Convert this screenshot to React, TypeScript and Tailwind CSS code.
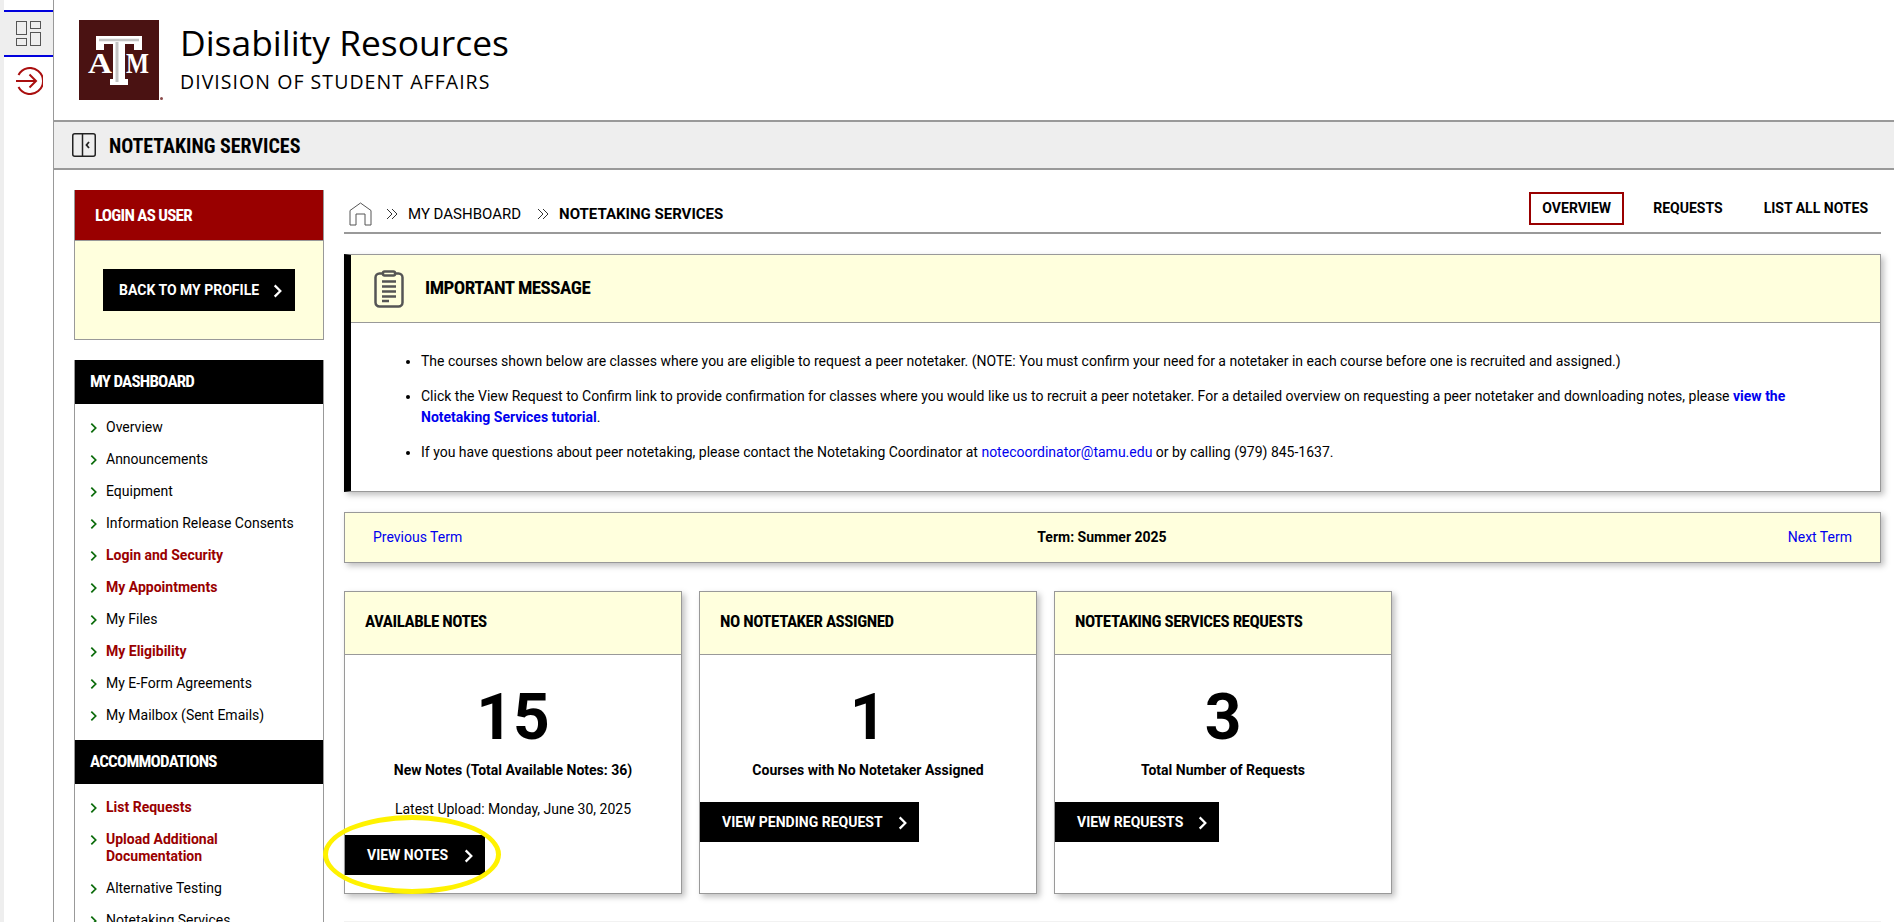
import React from 'react';

const roboto = 'font-["Roboto",sans-serif]';

const Chevron = ({ className }: { className: string }) => (
  <svg viewBox="0 0 8 12" className={className} fill="none" stroke="currentColor" strokeWidth="2">
    <path d="M1.5 1 L6.5 6 L1.5 11" />
  </svg>
);

const DoubleChevron = () => (
  <svg viewBox="0 0 12 12" className="w-[12px] h-[12px] text-[#333]" fill="none" stroke="currentColor" strokeWidth="1">
    <path d="M1 1 L6 6 L1 11 M6 1 L11 6 L6 11" />
  </svg>
);

const BlackButton = ({ label, className }: { label: string; className: string }) => (
  <a className={`flex items-center justify-between bg-black text-white font-bold text-[14px] uppercase ${className}`}>
    <span>{label}</span>
    <Chevron className="w-[9px] h-[14px] mt-[2px]" />
  </a>
);

const Logo = () => (
  <div className="relative w-[84px] h-[80px] shrink-0">
    <svg viewBox="0 0 80 80" className="w-[80px] h-[80px]">
      <rect width="80" height="80" fill="#4a1212" />
      <path d="M17 16 H63 V30 H55 V24 H46 V59 H49 V65 H31 V59 H34 V24 H25 V30 H17 Z" fill="#fff" />
      <path d="M20 20 H60" stroke="#c4c4c4" strokeWidth="2.5" fill="none" />
      <path d="M38 22 V62" stroke="#c4c4c4" strokeWidth="3" fill="none" />
      <text x="9" y="53" fontFamily="Liberation Serif, serif" fontWeight="700" fontSize="30" textLength="24" lengthAdjust="spacingAndGlyphs" fill="#fff">A</text>
      <text x="47" y="53" fontFamily="Liberation Serif, serif" fontWeight="700" fontSize="30" textLength="23" lengthAdjust="spacingAndGlyphs" fill="#fff">M</text>
    </svg>
    <span className="absolute right-0 bottom-[0px] w-[3px] h-[3px] rounded-full bg-[#8a4a4a]"></span>
  </div>
);

const Clipboard = () => (
  <svg viewBox="0 0 30 38" className="w-[30px] h-[38px] text-[#555]" fill="none" stroke="currentColor" strokeWidth="2.5">
    <rect x="1.5" y="3.5" width="27" height="33" rx="4" />
    <rect x="9" y="1.5" width="12" height="4" rx="1.5" fill="#ffffdd" />
    <path d="M8 11.5 H22 M8 16.5 H22 M8 21.5 H22 M8 26.5 H22 M8 31 H15" />
  </svg>
);

type NavItem = { label: string; red?: boolean };

const dashboardItems: NavItem[] = [
  { label: 'Overview' },
  { label: 'Announcements' },
  { label: 'Equipment' },
  { label: 'Information Release Consents' },
  { label: 'Login and Security', red: true },
  { label: 'My Appointments', red: true },
  { label: 'My Files' },
  { label: 'My Eligibility', red: true },
  { label: 'My E-Form Agreements' },
  { label: 'My Mailbox (Sent Emails)' },
];

const accommodationItems: NavItem[] = [
  { label: 'List Requests', red: true },
  { label: 'Upload Additional Documentation', red: true },
  { label: 'Alternative Testing' },
  { label: 'Notetaking Services' },
];

const NavList = ({ items }: { items: NavItem[] }) => (
  <ul className="pt-[7px] pb-[9px] flex flex-col">
    {items.map((item) => (
      <li key={item.label} className="flex items-start pl-[15px] pr-[20px] py-[5.5px] leading-[21px]">
        <Chevron className="w-[7px] h-[12px] mt-[5px] mr-[9px] shrink-0 text-[#0b6b0b]" />
        <span className={item.red ? 'text-[#990000] font-bold leading-[17px] py-[2px]' : 'text-black'}>{item.label}</span>
      </li>
    ))}
  </ul>
);

const SideHeader = ({ title }: { title: string }) => (
  <div className="bg-black text-white font-bold text-[17px] [font-stretch:77%] tracking-[-0.8px] h-[44px] flex items-center pl-[15px] uppercase">{title}</div>
);

const Card = ({ title, count, label, upload, button, buttonClass }: {
  title: string;
  count: string;
  label: string;
  upload?: string;
  button: string;
  buttonClass: string;
}) => (
  <div className="w-[338px] h-[303px] border border-[#999] bg-white shadow-[3px_3px_6px_rgba(0,0,0,0.25)] flex flex-col">
    <div className="h-[63px] shrink-0 bg-[#ffffdd] border-b border-[#999] flex items-center pl-[20px] pb-[2px] font-bold text-[17px] [font-stretch:77%] tracking-[-0.45px] uppercase">{title}</div>
    <div className="pt-[25px] text-center text-[64px] font-bold leading-[75px]">{count}</div>
    <div className="mt-[5px] text-center font-bold leading-[21px]">{label}</div>
    {upload && <div className="mt-[18px] text-center leading-[21px]">{upload}</div>}
    <BlackButton label={button} className={`${buttonClass} h-[40px] ${upload ? 'mt-[15px]' : 'mt-[21px]'}`} />
  </div>
);

export default function App() {
  return (
    <div className={`relative flex h-screen overflow-hidden bg-white text-black text-[14px] ${roboto}`}>
      <div className="w-[4px] shrink-0 bg-[#eeeeee]"></div>

      <aside className="w-[50px] shrink-0 border-r-[1px] border-[#999] pt-[10px] flex flex-col items-center">
        <div className="w-full h-[47px] bg-[#eeeeee] border-y-2 border-[#0000dd] flex items-center justify-center">
          <svg viewBox="0 0 25 25" className="w-[25px] h-[25px] text-[#555]" fill="none" stroke="currentColor" strokeWidth="1">
            <rect x="0.5" y="0.5" width="10" height="13" />
            <rect x="14.5" y="0.5" width="10" height="7" />
            <rect x="0.5" y="17.5" width="10" height="7" />
            <rect x="14.5" y="11.5" width="10" height="13" />
          </svg>
        </div>
        <svg viewBox="0 1 28 28" className="w-[28px] h-[28px] mt-[10px] text-[#aa0f0f]" fill="none" stroke="currentColor" strokeWidth="2">
          <path d="M3.5 9 A13 13 0 1 1 3.5 21" />
          <path d="M1 15 H21 M14.5 8.5 L21 15 L14.5 21.5" />
        </svg>
      </aside>

      <div className="flex-1 min-w-0 flex flex-col">
        <header className="h-[120px] shrink-0 flex items-start pl-[25px] pt-[20px]">
          <Logo />
          <div className={`pl-[17px] font-["Open_Sans",sans-serif]`}>
            <div className="text-[35.4px] leading-[48px] mt-[-2px]">Disability Resources</div>
            <div className="text-[19.5px] leading-[26px] mt-[3px] tracking-[1.05px] uppercase">Division of Student Affairs</div>
          </div>
        </header>

        <div className="h-[50px] shrink-0 bg-[#eeeeee] border-y-2 border-[#999] flex items-center pl-[18px]">
          <svg viewBox="0 0 24 24" className="w-[24px] h-[24px] text-[#222]" fill="none" stroke="currentColor" strokeWidth="1.5">
            <rect x="0.75" y="0.75" width="22.5" height="22.5" rx="2" />
            <path d="M10.5 1 V23" />
            <path d="M17 9 L14.5 12 L17 15" strokeWidth="1.8" />
          </svg>
          <h1 className="ml-[13px] pt-[2px] font-bold text-[20px] [font-stretch:82%] uppercase">Notetaking Services</h1>
        </div>

        <div className="flex-1 min-h-0 flex gap-[20px] pl-[20px] pr-[13px] pt-[20px]">
          <div className="w-[250px] shrink-0">
            <div className="border border-[#999] border-t-0">
              <div className="bg-[#990000] text-white font-bold text-[17px] [font-stretch:77%] tracking-[-0.75px] h-[50px] flex items-center pl-[20px] pt-[2px] uppercase">Login as User</div>
              <div className="h-[99px] bg-[#ffffdd] border-t border-[#999] flex items-center justify-center">
                <BlackButton label="Back to My Profile" className="w-[192px] h-[42px] pl-[16px] pr-[13px]" />
              </div>
            </div>

            <div className="mt-[20px] border-x border-[#999]">
              <SideHeader title="My Dashboard" />
              <NavList items={dashboardItems} />
              <SideHeader title="Accommodations" />
              <NavList items={accommodationItems} />
            </div>
          </div>

          <main className="flex-1 min-w-0">
            <div className="h-[44px] border-b-2 border-[#999] flex items-end justify-between">
              <div className="flex items-center pl-[5px] pb-[6px] text-[15px]">
                <svg viewBox="0 0 23 24" className="w-[23px] h-[24px] text-[#555]" fill="none" stroke="currentColor" strokeWidth="1">
                  <path d="M1 23 V8.5 L11.5 1 L22 8.5 V23 H16 V12 H7 V23 Z" />
                </svg>
                <span className="ml-[14px]"><DoubleChevron /></span>
                <span className="ml-[10px]">MY DASHBOARD</span>
                <span className="ml-[16px]"><DoubleChevron /></span>
                <span className="ml-[10px] font-bold">NOTETAKING SERVICES</span>
              </div>
              <nav className="flex items-center font-bold uppercase pb-[7px] pr-[13px]">
                <a className="w-[95px] h-[33px] border-2 border-[#990000] flex items-center justify-center">Overview</a>
                <a className="ml-[29px]">Requests</a>
                <a className="ml-[41px]">List All Notes</a>
              </nav>
            </div>

            <section className="mt-[20px] h-[238px] border border-[#999] border-l-[7px] border-l-black shadow-[3px_3px_6px_rgba(0,0,0,0.25)]">
              <div className="h-[68px] bg-[#ffffdd] border-b border-[#999] flex items-center pl-[23px]">
                <Clipboard />
                <h2 className="ml-[21px] font-bold text-[19px] [font-stretch:80%] tracking-[-0.5px] uppercase">Important Message</h2>
              </div>
              <ul className="pl-[70px] pr-[40px] pt-[28px] list-disc leading-[21px] flex flex-col gap-[14px]">
                <li>The courses shown below are classes where you are eligible to request a peer notetaker. (NOTE: You must confirm your need for a notetaker in each course before one is recruited and assigned.)</li>
                <li>Click the View Request to Confirm link to provide confirmation for classes where you would like us to recruit a peer notetaker. For a detailed overview on requesting a peer notetaker and downloading notes, please <a className="text-[#0000ee] font-bold">view the Notetaking Services tutorial</a>.</li>
                <li>If you have questions about peer notetaking, please contact the Notetaking Coordinator at <a className="text-[#0000ee]">notecoordinator@tamu.edu</a> or by calling (979) 845-1637.</li>
              </ul>
            </section>

            <div className="mt-[20px] h-[51px] border border-[#999] bg-[#ffffdd] shadow-[3px_3px_6px_rgba(0,0,0,0.25)] flex items-center justify-between px-[28px]">
              <a className="text-[#0000ee]">Previous Term</a>
              <span className="font-bold mr-[46px]">Term: Summer 2025</span>
              <a className="text-[#0000ee]">Next Term</a>
            </div>

            <div className="mt-[28px] flex gap-[17px]">
              <Card
                title="Available Notes"
                count="15"
                label="New Notes (Total Available Notes: 36)"
                upload="Latest Upload: Monday, June 30, 2025"
                button="View Notes"
                buttonClass="w-[140px] pl-[22px] pr-[12px]"
              />
              <Card
                title="No Notetaker Assigned"
                count="1"
                label="Courses with No Notetaker Assigned"
                button="View Pending Request"
                buttonClass="w-[219px] pl-[22px] pr-[12px]"
              />
              <Card
                title="Notetaking Services Requests"
                count="3"
                label="Total Number of Requests"
                button="View Requests"
                buttonClass="w-[164px] pl-[22px] pr-[12px]"
              />
            </div>
            <div className="mt-[27px] h-px bg-[#f2f2f2]"></div>
          </main>
        </div>
      </div>

      {/* hand-drawn highlight over the View Notes button */}
      <div className="absolute left-[323px] top-[815px] w-[178px] h-[79px] rounded-[50%] border-[5px] border-[#fff200]"></div>
    </div>
  );
}
